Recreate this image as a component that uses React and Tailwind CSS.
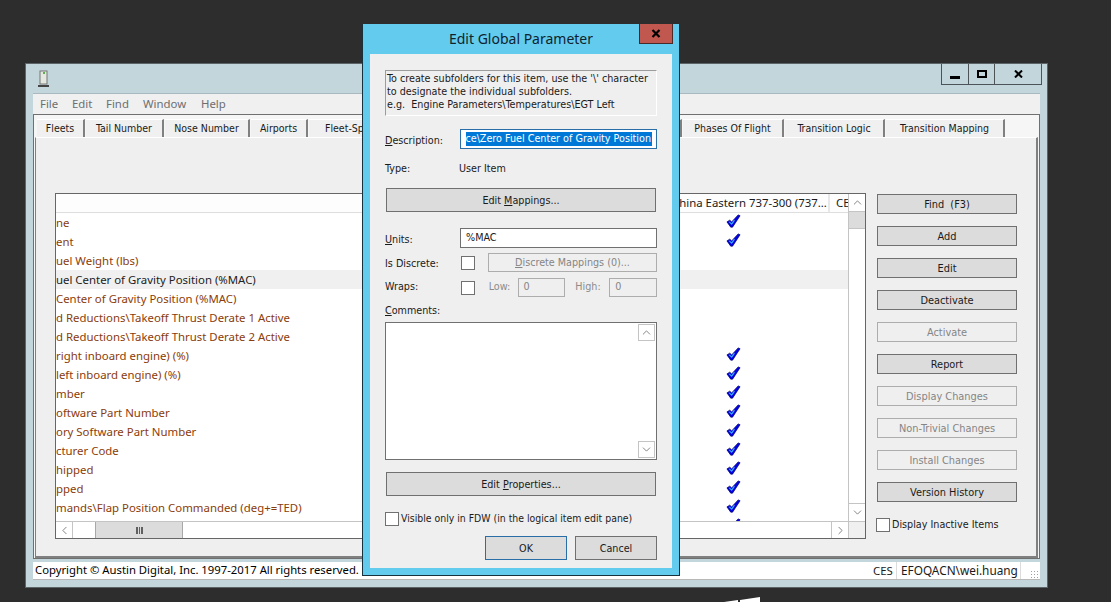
import { ChevronUp, ChevronDown, ChevronLeft, ChevronRight } from 'lucide-react';

const TAHOMA = "font-['DejaVu_Sans',sans-serif] [font-stretch:condensed] text-[10.7px]";
const SEGOE = "font-['Noto_Sans',sans-serif] [font-stretch:normal] text-[11.4px]";

const tabs = [
  { label: 'Fleets', w: 'w-[48px]' },
  { label: 'Tail Number', w: 'w-[78px]' },
  { label: 'Nose Number', w: 'w-[85px]' },
  { label: 'Airports', w: 'w-[57px]' },
  { label: 'Fleet-Specific Items', w: 'w-[373px]', left: true },
  { label: 'Phases Of Flight', w: 'w-[101px]' },
  { label: 'Transition Logic', w: 'w-[100px]' },
  { label: 'Transition Mapping', w: 'w-[119px]' },
];

const rows = [
  { text: 'ne', check: true },
  { text: 'ent', check: true },
  { text: 'uel Weight (lbs)' },
  { text: 'uel Center of Gravity Position (%MAC)', selected: true },
  { text: 'Center of Gravity Position (%MAC)' },
  { text: 'd Reductions\\Takeoff Thrust Derate 1 Active' },
  { text: 'd Reductions\\Takeoff Thrust Derate 2 Active' },
  { text: 'right inboard engine) (%)', check: true },
  { text: 'left inboard engine) (%)', check: true },
  { text: 'mber', check: true },
  { text: 'oftware Part Number', check: true },
  { text: 'ory Software Part Number', check: true },
  { text: 'cturer Code', check: true },
  { text: 'hipped', check: true },
  { text: 'pped', check: true },
  { text: 'mands\\Flap Position Commanded (deg+=TED)', check: true },
  { text: '', check: true },
];

const actions = [
  { label: 'Find  (F3)' },
  { label: 'Add' },
  { label: 'Edit' },
  { label: 'Deactivate' },
  { label: 'Activate', disabled: true },
  { label: 'Report' },
  { label: 'Display Changes', disabled: true },
  { label: 'Non-Trivial Changes', disabled: true },
  { label: 'Install Changes', disabled: true },
  { label: 'Version History' },
];

const CheckMark = () => (
  <svg width="15" height="14" viewBox="0 0 16 16" preserveAspectRatio="none" className="mb-[3px]">
    <path d="M1 9 L4 7 L6 9 L13 1 L15 2 L7 15 L5 15 Z" fill="#0000e6" stroke="#00006e" strokeWidth="0.8" />
    <path d="M3.5 9 L6 11.5 L9 7 L6.5 11" fill="none" stroke="#38a8ff" strokeWidth="1.2" />
  </svg>
);

const Checkbox = () => <div className="w-[14px] h-[14px] bg-white border border-[#707070] shrink-0" />;

const WinButton = ({ children, disabled, className = '' }) => (
  <div
    className={`flex items-center justify-center border whitespace-pre pt-[2px] ${
      disabled ? 'bg-[#efefef] border-[#adadad] text-[#858585]' : 'bg-[#dcdcdc] border-[#707070] text-[#1a1a1a]'
    } ${className}`}
  >
    {children}
  </div>
);

const ScrollArrow = ({ Icon, className = '' }) => (
  <div className={`flex items-center justify-center bg-white border-[#c4c4c4] ${className}`}>
    <Icon size={13} strokeWidth={1.4} className="text-[#606060]" />
  </div>
);

const MainWindow = () => (
  <div className={`absolute left-[25px] top-[63px] w-[1023px] h-[525px] bg-[#c3d6dc] border border-[#5c6468] flex flex-col px-[7px] text-[#1a1a1a] ${TAHOMA}`}>
    {/* title bar */}
    <div className="h-[29px] shrink-0 flex justify-between">
      <svg width="12" height="18" viewBox="0 0 12 18" className="ml-[5px] mt-[6px]">
        <rect x="2" y="1" width="7" height="13" fill="#e4e8e0" stroke="#777" />
        <rect x="5" y="2" width="2" height="2" fill="#5ab04a" />
        <rect x="0" y="15" width="11" height="2" fill="#444" />
      </svg>
      <div className="flex h-[21px] mr-[-2px] border border-t-0 border-[#4d5458] text-black">
        <div className="w-[27px] border-r border-[#4d5458] flex items-end justify-center pb-[5px]">
          <div className="w-[10px] h-[3px] bg-black" />
        </div>
        <div className="w-[26px] border-r border-[#4d5458] flex items-center justify-center">
          <div className="w-[10px] h-[8px] border-2 border-black" />
        </div>
        <div className="w-[46px] flex items-center justify-center">
          <svg width="9" height="8" viewBox="0 0 9 8">
            <path d="M1 0.5 L8 7.5 M8 0.5 L1 7.5" stroke="#000" strokeWidth="2" />
          </svg>
        </div>
      </div>
    </div>
    {/* menu */}
    <div className={`h-[21px] shrink-0 bg-[#f0f0f0] border-t border-[#a9b9bf] flex items-center pl-[7px] text-[#6e6e6e] ${SEGOE}`}>
      <span className="w-[32px]">File</span>
      <span className="w-[34px]">Edit</span>
      <span className="w-[37px]">Find</span>
      <span className="w-[58px]">Window</span>
      <span>Help</span>
    </div>
    {/* tab box */}
    <div className="h-[445px] shrink-0 border border-[#707070] bg-[#f6f6f6] flex flex-col px-[1px]">
      <div className="h-[22px] shrink-0 flex pl-[2px] pt-[4px] text-[10.5px]">
        {tabs.map((tab) => (
          <div
            key={tab.label}
            className={`${tab.w} h-[18px] shrink-0 mr-[1px] pt-[1px] flex items-center border-t border-white border-r-2 border-r-[#808080] bg-[#f0f0f0] whitespace-nowrap ${
              tab.left ? 'pl-[16px]' : 'justify-center'
            }`}
          >
            {tab.label}
          </div>
        ))}
      </div>
      <div className="flex-1 bg-[#efefef] border-l border-b-2 border-r-2 border-[#808080] border-t border-t-white flex pl-[19px] pt-[55px]">
        {/* list */}
        <div className={`w-[811px] h-[346px] shrink-0 bg-white border border-[#666] flex flex-col ${SEGOE}`}>
          <div className="flex-1 flex min-h-0">
            <div className="w-[792px] shrink-0 flex flex-col">
              <div className="h-[19px] shrink-0 flex bg-[#fdfdfd] border-b border-[#dedede]">
                <div className="w-[580px] shrink-0" />
                <div className="w-[194px] shrink-0 pl-[36px] border-r-2 border-[#e8e8e8] flex items-center whitespace-nowrap">
                  China Eastern 737-300 (737...
                </div>
                <div className="flex-1 pl-[6px] flex items-center overflow-hidden">CES</div>
              </div>
              <div className="h-[308px] overflow-hidden">
                {rows.map((row, i) => (
                  <div key={i} className={`h-[19px] flex items-center ${row.selected ? 'bg-[#f0f0f0] text-[#222]' : 'text-[#8a3c0a]'}`}>
                    <div className="w-[580px] shrink-0 whitespace-pre">{row.text}</div>
                    <div className="w-[194px] shrink-0 flex justify-center">{row.check && <CheckMark />}</div>
                  </div>
                ))}
              </div>
            </div>
            <div className="w-[17px] shrink-0 border-l border-[#c4c4c4] flex flex-col">
              <ScrollArrow Icon={ChevronUp} className="h-[18px] border-b" />
              <div className="h-[17px] bg-[#dcdcdc] border-b border-[#c4c4c4]" />
              <div className="flex-1" />
              <ScrollArrow Icon={ChevronDown} className="h-[18px] border-t" />
            </div>
          </div>
          <div className="h-[17px] shrink-0 flex border-t border-[#c4c4c4]">
            <ScrollArrow Icon={ChevronLeft} className="w-[17px] border-r" />
            <div className="w-[22px]" />
            <div className="w-[88px] bg-[#dcdcdc] border-x border-[#a8a8a8] flex items-center justify-center">
              <div className="w-[7px] h-[7px] border-x-2 border-[#606060] flex justify-center">
                <div className="w-[1px] bg-[#606060]" />
              </div>
            </div>
            <div className="flex-1" />
            <ScrollArrow Icon={ChevronRight} className="w-[17px] border-l" />
            <div className="w-[17px] bg-[#f0f0f0] border-l border-[#c4c4c4]" />
          </div>
        </div>
        {/* action buttons */}
        <div className="ml-[11px] mt-[1px] flex flex-col text-[10.9px]">
          <div className="flex flex-col gap-[12px]">
            {actions.map((action) => (
              <WinButton key={action.label} disabled={action.disabled} className="w-[140px] h-[20px]">
                {action.label}
              </WinButton>
            ))}
          </div>
          <div className="flex items-center gap-[2px] mt-[15px] -ml-[1px]">
            <Checkbox />
            <span className="text-[10.7px]">Display Inactive Items</span>
          </div>
        </div>
      </div>
    </div>
    {/* status bar */}
    <div className={`h-[18px] shrink-0 mt-[3px] bg-white flex items-center border-b border-b-[#b8b8b8] ${SEGOE}`}>
      <div className="flex-1 pl-[2px] whitespace-nowrap text-black text-[11.3px]">Copyright © Austin Digital, Inc. 1997-2017 All rights reserved.</div>
      <div className="w-[24px] border-r border-[#dcdcdc] h-full flex items-center">CES</div>
      <div className="w-[124px] pl-[4px] border-r border-[#dcdcdc] h-full flex items-center whitespace-nowrap text-[11.8px]">EFOQACN\wei.huang</div>
      <div className="w-[19px] h-full flex items-end justify-end pr-[2px] pb-[1px]">
        <div className="w-[8px] h-[8px] bg-[radial-gradient(#a0a0a0_1px,transparent_1px)] bg-[length:3px_3px]" />
      </div>
    </div>
  </div>
);

const Dialog = () => (
  <div className={`absolute left-[362px] top-[24px] w-[318px] h-[552px] bg-[#62cbee] border border-[#17323f] border-t-0 flex flex-col px-[7px] pb-[7px] text-[#1a1a1a] ${TAHOMA}`}>
    <div className="h-[30px] shrink-0 relative flex items-center justify-center pb-[1px] font-['Noto_Sans',sans-serif] [font-stretch:normal] text-[14px] text-[#10232c]">
      Edit Global Parameter
      <div className="absolute right-[-1px] top-0 w-[34px] h-[20px] bg-[#c0584f] border border-t-0 border-[#4a2a28] flex items-center justify-center">
        <svg width="10" height="9" viewBox="0 0 10 9">
          <path d="M1.5 1 L8.5 8 M8.5 1 L1.5 8" stroke="#000" strokeWidth="2.2" />
        </svg>
      </div>
    </div>
    <div className="flex-1 bg-[#efefef] flex flex-col px-[15px] pt-[16px]">
      <div className="h-[46px] border border-[#9c9c9c] border-r-white border-b-white pl-[1px] pt-[1px] leading-[13px] whitespace-pre">
        {'To create subfolders for this item, use the \'\\\' character\nto designate the individual subfolders.\ne.g.  Engine Parameters\\Temperatures\\EGT Left'}
      </div>
      <div className="flex items-center h-[20px] mt-[13px]">
        <span className="w-[75px] pt-[5px]"><u>D</u>escription:</span>
        <div className="flex-1 h-[20px] bg-white border border-[#2a6ea8] pl-[5px] flex items-center overflow-hidden">
          <span className="h-[14px] w-[186px] bg-[#0078d7] text-white whitespace-nowrap flex items-center justify-end overflow-hidden pr-[1px]">
            ce\Zero Fuel Center of Gravity Position
          </span>
        </div>
      </div>
      <div className="flex items-center h-[14px] mt-[12px] pt-[2px]">
        <span className="w-[74px]">Type:</span>
        <span>User Item</span>
      </div>
      <WinButton className="mx-[1px] h-[24px] mt-[13px]">Edit <u>M</u>appings...</WinButton>
      <div className="flex items-center h-[20px] mt-[16px]">
        <span className="w-[75px] pt-[5px]"><u>U</u>nits:</span>
        <div className="flex-1 h-[20px] bg-white border border-[#707070] pl-[5px] flex items-center">%MAC</div>
      </div>
      <div className="flex items-center h-[19px] mt-[5px]">
        <span className="w-[76px] pt-[4px]">Is Discrete:</span>
        <Checkbox />
        <WinButton disabled className="ml-[13px] w-[169px] h-[19px]"><span><u>D</u>iscrete Mappings (0)...</span></WinButton>
      </div>
      <div className="flex items-center h-[19px] mt-[6px]">
        <span className="w-[76px]">Wraps:</span>
        <Checkbox />
        <span className="ml-[14px] w-[29px] text-[#8c8c8c]">Low:</span>
        <div className="w-[48px] h-[19px] border border-[#adadad] pl-[5px] flex items-center text-[#858585]">0</div>
        <span className="ml-[10px] w-[34px] text-[#8c8c8c]">High:</span>
        <div className="w-[48px] h-[19px] border border-[#adadad] pl-[5px] flex items-center text-[#858585]">0</div>
      </div>
      <div className="h-[14px] mt-[6px] pt-[2px] flex items-center"><span><u>C</u>omments:</span></div>
      <div className="h-[138px] mt-[5px] bg-white border border-[#707070] flex justify-end pr-[1px] py-[1px]">
        <div className="w-[17px] h-full flex flex-col justify-between">
          <ScrollArrow Icon={ChevronUp} className="h-[17px] border" />
          <ScrollArrow Icon={ChevronDown} className="h-[17px] border" />
        </div>
      </div>
      <WinButton className="mx-[1px] h-[24px] mt-[12px]">Edit <u>P</u>roperties...</WinButton>
      <div className="flex items-center gap-[2px] mt-[15px] whitespace-nowrap">
        <Checkbox />
        <span className="text-[10.4px]">Visible only in FDW (in the logical item edit pane)</span>
      </div>
      <div className="flex justify-end gap-[8px] mt-[9px]">
        <WinButton className="w-[82px] h-[24px] !border-[#2a6ea8]">OK</WinButton>
        <WinButton className="w-[82px] h-[24px]">Cancel</WinButton>
      </div>
    </div>
  </div>
);

export default function App() {
  return (
    <div className="relative w-[1111px] h-[602px] overflow-hidden bg-[#2d2d2d]">
      <MainWindow />
      <Dialog />
      {/* bit of the windows logo at the bottom edge */}
      <svg width="40" height="8" viewBox="0 0 40 8" className="absolute left-[724px] top-[596px]">
        <path d="M0 6 L14 4 L14 8 L0 8 Z M16 4 L36 1 L36 8 L16 8 Z" fill="#fff" />
      </svg>
    </div>
  );
}
